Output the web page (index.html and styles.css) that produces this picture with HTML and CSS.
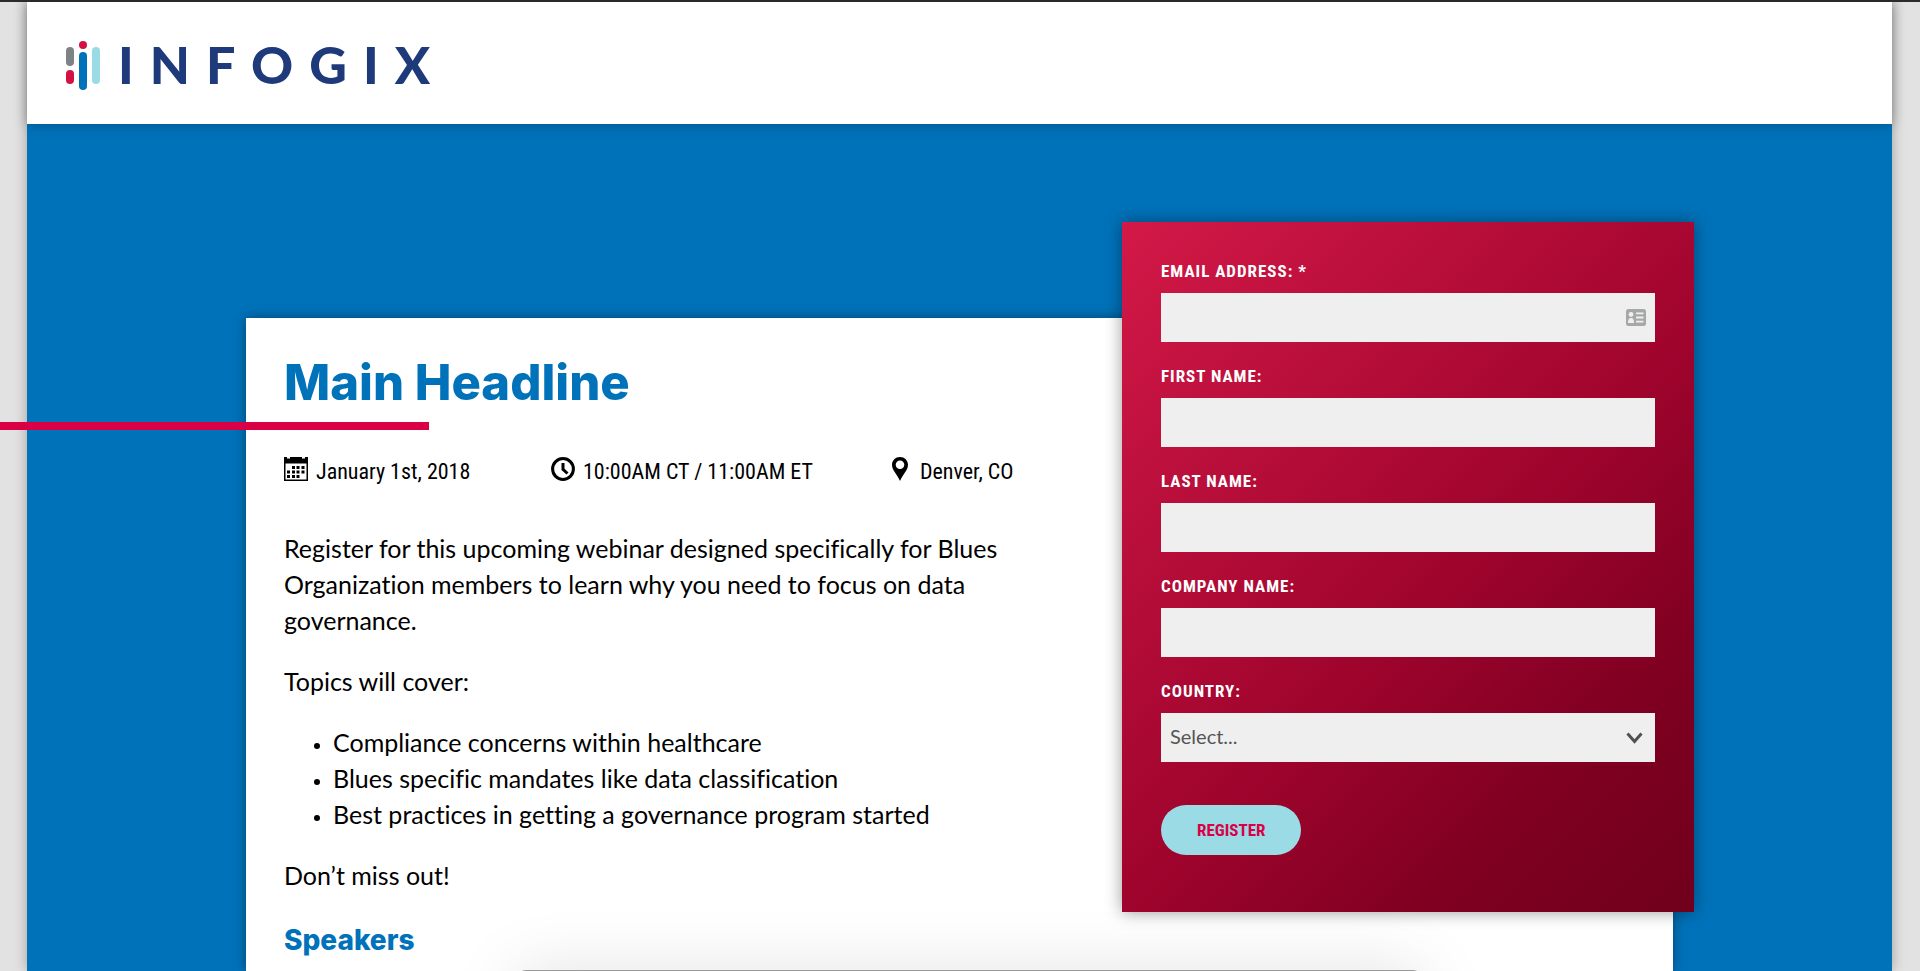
FILE: index.html
```html
<!DOCTYPE html>
<html lang="en">
<head>
<meta charset="utf-8">
<title>Infogix – Webinar Registration</title>
<link rel="stylesheet" href="styles.css">
</head>
<body>
<div class="page">
  <header class="site-header">
    <a class="logo" href="#" aria-label="Infogix">
      <svg class="logo-mark" viewBox="0 0 36 50" aria-hidden="true">
        <rect x="0" y="6" width="8" height="19" rx="4" fill="#7d8287"/>
        <rect x="0" y="29" width="8" height="14" rx="4" fill="#d31145"/>
        <circle cx="17" cy="4" r="4" fill="#d31145"/>
        <rect x="13" y="11" width="8" height="38" rx="4" fill="#0072ba"/>
        <rect x="26" y="6" width="8" height="37" rx="4" fill="#9bdbe5"/>
      </svg>
      <span class="logo-name">INFOGIX</span>
    </a>
  </header>
  <main class="hero">
    <div class="card">
      <article class="content">
        <h1 class="headline">Main Headline</h1>
        <ul class="meta">
          <li class="meta-item">
            <svg class="meta-icon" viewBox="0 0 24 24" aria-hidden="true">
              <path fill-rule="evenodd" d="M0 0H3V1.500H6V0H18V1.500H21V0H24V24H0ZM1.500 6.500V22.500H22.500V6.500Z"/>
              <path d="M8 9h3v3H8zM12.500 9h3v3h-3zM17.500 9h3v3h-3zM3 13.500h3v3H3zM8 13.500h3v3H8zM12.500 13.500h3v3h-3zM17.500 13.500h3v3h-3zM3 18h3v3H3zM8 18h3v3H8zM12.500 18h3v3h-3z"/>
            </svg>
            <span>January 1st, 2018</span>
          </li>
          <li class="meta-item">
            <svg class="meta-icon" viewBox="0 0 24 24" aria-hidden="true">
              <circle cx="12" cy="12" r="10.400" fill="none" stroke="#000" stroke-width="3"/>
              <path d="M12 6V12.300L16.500 16.500" fill="none" stroke="#000" stroke-width="3"/>
            </svg>
            <span>10:00AM CT / 11:00AM ET</span>
          </li>
          <li class="meta-item">
            <svg class="meta-icon meta-pin" viewBox="0 0 16 24" aria-hidden="true">
              <path fill-rule="evenodd" d="M8 0C3.500 0 0 3.500 0 8c0 5 5 9 8 16 3-7 8-11 8-16 0-4.500-3.500-8-8-8zM8 3.500a4.300 4.300 0 1 1 0 8.600 4.300 4.300 0 0 1 0-8.600z"/>
            </svg>
            <span>Denver, CO</span>
          </li>
        </ul>
        <p>Register for this upcoming webinar designed specifically for Blues Organization members to learn why you need to focus on data governance.</p>
        <p>Topics will cover:</p>
        <ul class="topics">
          <li>Compliance concerns within healthcare</li>
          <li>Blues specific mandates like data classification</li>
          <li>Best practices in getting a governance program started</li>
        </ul>
        <p>Don’t miss out!</p>
        <h2 class="subhead">Speakers</h2>
      </article>
      <form class="register">
        <div class="field">
          <label for="email">Email Address: *</label>
          <div class="control">
            <input id="email" type="email" required>
            <svg class="contact-icon" viewBox="0 0 20 17" aria-hidden="true">
              <rect width="20" height="17" rx="2.500" fill="#a6a8a8"/>
              <circle cx="5" cy="5.500" r="2.400" fill="#efefef"/>
              <path d="M2 14c0-3 .5-5 3-5s3 2 3 5z" fill="#efefef"/>
              <path d="M10 4.300h7.500M10 8.500h7.500M10 12.700h7.500" stroke="#efefef" stroke-width="1.800"/>
            </svg>
          </div>
        </div>
        <div class="field">
          <label for="first">First Name:</label>
          <input id="first" type="text">
        </div>
        <div class="field">
          <label for="last">Last Name:</label>
          <input id="last" type="text">
        </div>
        <div class="field">
          <label for="company">Company Name:</label>
          <input id="company" type="text">
        </div>
        <div class="field">
          <label for="country">Country:</label>
          <div class="control">
            <select id="country"><option>Select...</option></select>
            <svg class="select-arrow" viewBox="0 0 17 12" aria-hidden="true">
              <path d="M1.500 1.500L8.500 9.500L15.500 1.500" fill="none" stroke="#505050" stroke-width="3"/>
            </svg>
          </div>
        </div>
        <button class="submit" type="submit">Register</button>
      </form>
    </div>
  </main>
</div>
<div class="dock-shadow" aria-hidden="true"></div>
</body>
</html>
```

FILE: styles.css
```css
* { box-sizing: border-box; }

body {
  margin: 0;
  overflow-x: hidden;
  background: #e2e2e2;
  border-top: 2px solid #2b292b;
  color: #000;
  font: 25px/36px Lato, "Open Sans", sans-serif;
  font-variant-ligatures: no-common-ligatures;
}

.page {
  display: flex;
  flex-direction: column;
  min-height: calc(100vh - 2px);
  margin: 0 28px 0 27px;
  box-shadow: 0 0 12px rgba(0, 0, 0, 0.3);
}

.site-header {
  position: relative;
  padding: 39px 39px 33px;
  background: #fff;
  box-shadow: 0 0 12px rgba(0, 0, 0, 0.3);
}

.logo {
  display: flex;
  align-items: flex-start;
  gap: 16px;
  height: 50px;
  color: #1f3a7b;
  text-decoration: none;
}

.logo-mark { width: 36px; height: 50px; }

.logo-name {
  font-size: 52px;
  font-weight: 900;
  line-height: 46px;
  letter-spacing: 16px;
}

.hero {
  display: flex;
  flex: 1;
  justify-content: center;
  padding: 194px 40px 0;
  background: #0072ba;
}

.card {
  display: flex;
  align-items: flex-start;
  flex: 1;
  max-width: 1427px;
  background: #fff;
  box-shadow: 0 0 12px rgba(0, 0, 0, 0.4);
}

.content {
  flex: 1;
  padding: 38px 60px 0 38px;
}

.content p { margin: 0 0 25px; }

.headline {
  position: relative;
  margin: 0 0 24px;
  padding-bottom: 20px;
  color: #0072ba;
  font-family: Inter, sans-serif;
  font-size: 49px;
  font-weight: 800;
  line-height: 54px;
}

/* Accent rule running in from the window's left edge */
.headline::after {
  content: "";
  position: absolute;
  bottom: 0;
  left: -50vw;
  width: calc(50vw + 145px);
  height: 8px;
  background: #d90045;
}

.meta {
  display: grid;
  grid-template-columns: 267px 341px auto;
  margin: 0 0 40px;
  padding: 0;
  list-style: none;
  font-family: "Liberation Sans Narrow", "Roboto Condensed", Roboto, sans-serif;
  font-size: 22px;
  white-space: nowrap;
}

.meta-item {
  display: flex;
  align-items: center;
  gap: 8px;
}

.meta-icon { width: 24px; height: 24px; margin-bottom: 6px; }
.meta-pin { width: 16px; margin-right: 4px; }

.topics {
  margin: 0 0 25px;
  padding-left: 49px;
}

.topics li::marker { font-size: 18px; }

.subhead {
  margin: 0;
  padding: 4px 0;
  color: #0072ba;
  font-family: Inter, sans-serif;
  font-size: 28px;
  font-weight: 800;
}

.register {
  position: relative;
  flex: 0 0 572px;
  margin: -96px -21px 40px 0;
  padding: 37px 39px 57px;
  background: linear-gradient(135deg, #d31948 0%, #9f042d 54%, #800021 78%, #70001b 100%);
  box-shadow: 0 0 16px rgba(0, 0, 0, 0.4);
}

.field { margin-bottom: 22px; }

.field label {
  display: block;
  margin-bottom: 10px;
  color: #fff;
  font: bold 17px/24px "Liberation Sans Narrow", "Roboto Condensed", Roboto, sans-serif;
  letter-spacing: 1px;
  text-transform: uppercase;
}

.control { position: relative; }

.field input,
.field select {
  display: block;
  width: 100%;
  height: 49px;
  padding: 0 48px 4px 9px;
  border: 0;
  border-radius: 0;
  appearance: none;
  background: #efefef;
  color: #555;
  font: 20px/24px Lato, "Open Sans", sans-serif;
}

.contact-icon {
  position: absolute;
  top: 16px;
  right: 9px;
  width: 20px;
  height: 17px;
}

.select-arrow {
  position: absolute;
  top: 19px;
  right: 12px;
  width: 17px;
  height: 12px;
  pointer-events: none;
}

.submit {
  display: block;
  margin-top: 43px;
  padding: 13px 36px;
  border: 0;
  border-radius: 25px;
  background: #9bdbe5;
  color: #d90045;
  font: bold 17px/24px "Liberation Sans Narrow", "Roboto Condensed", Roboto, sans-serif;
  text-transform: uppercase;
}

.dock-shadow {
  position: fixed;
  bottom: -39px;
  left: 27%;
  width: 47%;
  height: 40px;
  border-radius: 8px;
  background: #9a9a9a;
  box-shadow: 0 10px 70px rgba(0, 0, 0, 0.18);
  pointer-events: none;
}
```
